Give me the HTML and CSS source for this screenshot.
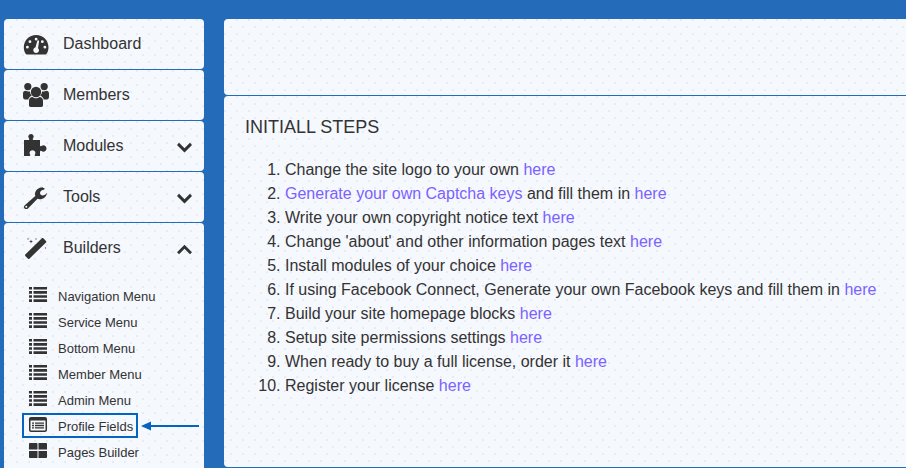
FILE: index.html
```html
<!DOCTYPE html>
<html lang="en">
<head>
    <meta charset="UTF-8">
    <title>Admin</title>
    <link rel="stylesheet" href="styles.css">
</head>
<body>
    <svg class="defs" width="0" height="0">
        <symbol id="i-list" viewBox="0 0 18 15">
            <path d="M0 0h3v2.600H0zM4.500 0H18v2.600H4.500zM0 4.100h3v2.600H0zM4.500 4.100H18v2.600H4.500zM0 8.200h3v2.600H0zM4.500 8.200H18v2.600H4.500zM0 12.300h3V15H0zM4.500 12.300H18V15H4.500z"/>
        </symbol>
        <symbol id="i-down" viewBox="0 0 16 11">
            <path d="M2.200.5 8 6.300 13.800.5l2.200 2.200L8 10.700 0 2.700z"/>
        </symbol>
        <symbol id="i-up" viewBox="0 0 16 11">
            <path d="M2.200 10.500 8 4.700l5.800 5.800 2.200-2.200L8 .3 0 8.300z"/>
        </symbol>
    </svg>

    <div class="page">
        <div class="sidebar">
            <div class="menu-item">
                <svg class="icon" viewBox="0 0 26 24"><path transform="translate(.8 .6) scale(.95)" fill-rule="evenodd" d="M13 2.500C5.800 2.500 0 8.200 0 15.300c0 2.600.7 5 2 7 .3.400.6.700 1.100.7h19.800c.5 0 .8-.3 1.100-.7 1.300-2 2-4.400 2-7 0-7.100-5.800-12.800-13-12.800zM13 5.400a1.500 1.500 0 1 1 0 3 1.500 1.500 0 0 1 0-3zM6.500 8a1.500 1.500 0 1 1 0 3 1.500 1.500 0 0 1 0-3zM3.800 13.800a1.500 1.500 0 1 1 0 3 1.500 1.500 0 0 1 0-3zM22.200 13.800a1.500 1.500 0 1 1 0 3 1.500 1.500 0 0 1 0-3zM19.500 8a1.500 1.500 0 1 1 0 3 1.500 1.500 0 0 1 0-3zM15.400 8.200c.5.100.8.500.7 1l-1.100 7.200c.6.500 1 1.300 1 2.200 0 1.700-1.300 2.900-3 2.900s-3-1.200-3-2.900c0-1.400.9-2.500 2.200-2.800l2-7c.2-.4.700-.7 1.200-.6z"/></svg>
                <span>Dashboard</span>
            </div>
            <div class="menu-item">
                <svg class="icon" viewBox="0 0 26 24"><circle cx="13" cy="9" r="5.200"/><circle cx="4.800" cy="3.600" r="3.600"/><circle cx="21.200" cy="3.600" r="3.600"/><path d="M7.500 24c-.8 0-1.500-.6-1.500-1.400v-4.800c0-2.300 1.500-3.800 3.500-3.800 1 .9 2.200 1.300 3.500 1.300s2.500-.4 3.500-1.300c2 0 3.500 1.500 3.500 3.800v4.800c0 .8-.7 1.400-1.500 1.400zM0 13.500v-2.700c0-2 1-3 2.800-3 .7.500 1.500.8 2.400.8h1.700c.1 1.600.8 3.100 1.900 4.100-1.800.6-3.200 2-3.500 3.800H2c-1.200 0-2-1.200-2-3zM26 13.500v-2.700c0-2-1-3-2.800-3-.7.500-1.500.8-2.400.8h-1.700c-.1 1.600-.8 3.100-1.900 4.100 1.800.6 3.200 2 3.500 3.800H24c1.200 0 2-1.200 2-3z"/></svg>
                <span>Members</span>
            </div>
            <div class="menu-item">
                <svg class="icon" viewBox="0 0 26 24"><path d="M1 6h4.500c.8 0 1-.8.600-1.400C5.600 3.800 5.300 3.300 5.300 2.700 5.300 1.200 6.500 0 8 0s2.700 1.200 2.700 2.700c0 .6-.3 1.100-.8 1.900-.4.600-.2 1.400.6 1.400H17v5.500c0 .8.800 1 1.400.6.800-.5 1.300-.8 1.900-.8 1.800 0 3.200 1.400 3.200 3.200s-1.400 3.200-3.200 3.200c-.6 0-1.100-.3-1.900-.8-.6-.4-1.400-.2-1.400.6V22h-4.500c-.8 0-1-.8-.6-1.400.3-.5.5-1 .5-1.600 0-1.600-1.300-2.700-2.900-2.700S6.600 17.400 6.600 19c0 .6.200 1.100.5 1.600.4.600.2 1.400-.6 1.400H1z"/></svg>
                <span>Modules</span>
                <svg class="chevron"><use href="#i-down"/></svg>
            </div>
            <div class="menu-item">
                <svg class="icon" viewBox="0 0 26 24"><path fill-rule="evenodd" d="M20 2.300C15.500 2.300 12 5.400 12 9c0 .7.100 1.300.3 1.900L1.800 20.300c-1.200 1.100-1.200 2.400-.2 3.300s2.300.9 3.400-.2l9.500-9.600c.8.300 1.500.4 2.300.4 3.800 0 6.700-2.600 7.200-6.500-1.200 1.700-2.800 2.800-4.300 2.800-1.500 0-2.700-1-2.700-2.400 0-1.700 1.300-2.800 3.300-3.300 1-.3 1.400-.6 1.300-1.300-.2-.5-1-.6-1.600-.6zM3.300 20.800a1 1 0 1 0 0 2 1 1 0 0 0 0-2z"/></svg>
                <span>Tools</span>
                <svg class="chevron"><use href="#i-down"/></svg>
            </div>
            <div class="menu-group">
                <div class="menu-item">
                    <svg class="icon" viewBox="0 0 26 24"><path d="M20.300 2.300 23 5c.4.400.4 1 0 1.400L6.400 22.700c-.4.400-1 .4-1.400 0l-2.700-2.700c-.4-.4-.4-1 0-1.400L18.900 2.300c.4-.4 1-.4 1.400 0z"/><path d="M8 3.500l.5 1.500 1.500.5-1.500.5L8 7.500 7.500 6 6 5.500l1.500-.5zM5 2l.3.7.7.3-.7.3L5 4l-.3-.7L4 3l.7-.3zM13 2l.3.7.7.3-.7.3-.3.7-.3-.7-.7-.3.7-.3zM22.500 11l.3.7.7.3-.7.3-.3.7-.3-.7-.7-.3.7-.3z"/></svg>
                    <span>Builders</span>
                    <svg class="chevron"><use href="#i-up"/></svg>
                </div>
                <ul class="submenu">
                    <li><svg class="sub-icon"><use href="#i-list"/></svg>Navigation Menu</li>
                    <li><svg class="sub-icon"><use href="#i-list"/></svg>Service Menu</li>
                    <li><svg class="sub-icon"><use href="#i-list"/></svg>Bottom Menu</li>
                    <li><svg class="sub-icon"><use href="#i-list"/></svg>Member Menu</li>
                    <li><svg class="sub-icon"><use href="#i-list"/></svg>Admin Menu</li>
                    <li class="marked">
                        <svg class="sub-icon" viewBox="0 0 18 15"><path fill-rule="evenodd" d="M2 0h14c1.100 0 2 .9 2 2v11c0 1.100-.9 2-2 2H2c-1.100 0-2-.9-2-2V2C0 .9.900 0 2 0zM1.500 3.500V13c0 .3.200.5.500.5h14c.3 0 .5-.2.500-.5V3.500zM3 5.400h2v1.400H3zM6 5.400h9v1.400H6zM3 7.800h2v1.400H3zM6 7.800h9v1.400H6zM3 10.200h2v1.400H3zM6 10.200h9v1.400H6z"/></svg>Profile Fields
                        <svg class="arrow" viewBox="0 0 58 12"><path d="M0 6 10 1.500V5h48v2H10v3.500z"/></svg>
                    </li>
                    <li><svg class="sub-icon" viewBox="0 0 18 15"><path d="M0 1c0-.6.400-1 1-1h6.800c.3 0 .7.400.7 1v5.500H0zM9.500 0H17c.6 0 1 .4 1 1v5.500H9.500zM0 8h8.500v7H1c-.6 0-1-.4-1-1zM9.500 8H18v6c0 .6-.4 1-1 1H9.500z"/></svg>Pages Builder</li>
                </ul>
            </div>
        </div>
        <div class="main">
            <div class="panel top-panel"></div>
            <div class="panel steps">
                <h2>INITIALL STEPS</h2>
                <ol>
                    <li>Change the site logo to your own <a href="#">here</a></li>
                    <li><a href="#">Generate your own Captcha keys</a> and fill them in <a href="#">here</a></li>
                    <li>Write your own copyright notice text <a href="#">here</a></li>
                    <li>Change 'about' and other information pages text <a href="#">here</a></li>
                    <li>Install modules of your choice <a href="#">here</a></li>
                    <li>If using Facebook Connect, Generate your own Facebook keys and fill them in <a href="#">here</a></li>
                    <li>Build your site homepage blocks <a href="#">here</a></li>
                    <li>Setup site permissions settings <a href="#">here</a></li>
                    <li>When ready to buy a full license, order it <a href="#">here</a></li>
                    <li>Register your license <a href="#">here</a></li>
                </ol>
            </div>
        </div>
    </div>
</body>
</html>
```

FILE: styles.css
```css
* {
    margin: 0;
    padding: 0;
    box-sizing: border-box;
}

html, body {
    height: 100%;
    overflow: hidden;
}

body {
    background-color: #246bb9;
    font-family: "Liberation Sans", Arial, sans-serif;
    color: #333333;
}

.defs {
    position: absolute;
}

.page {
    display: flex;
    gap: 20px;
    padding: 19px 0 0 4px;
    height: 468px;
}

.sidebar {
    display: flex;
    flex-direction: column;
    gap: 1px;
    width: 200px;
    flex-shrink: 0;
}

.menu-item, .panel, .menu-group {
    background-color: #f5f8fd;
    background-image:
        radial-gradient(circle at 1px 1px, #e9ebf2 .7px, transparent 1px),
        radial-gradient(circle at 1px 1px, #e9ebf2 .7px, transparent 1px);
    background-size: 12px 14px;
    background-position: 0 0, 6px 7px;
}

.menu-item {
    display: flex;
    align-items: center;
    height: 50px;
    padding-left: 19px;
    border-radius: 4px;
    font-size: 16px;
}

.menu-group {
    border-radius: 4px 4px 0 0;
    flex: 1;
}

.menu-group .menu-item {
    background: none;
}

.icon {
    width: 26px;
    height: 24px;
    margin-right: 14px;
    fill: #333333;
}

.chevron {
    width: 15px;
    height: 11px;
    margin-top: 3px;
    margin-left: auto;
    margin-right: 12px;
    fill: #333333;
}

.submenu {
    list-style: none;
    padding-top: 10px;
}

.submenu li {
    position: relative;
    display: flex;
    align-items: center;
    height: 26px;
    padding-left: 25px;
    font-size: 13px;
}

.sub-icon {
    width: 18px;
    height: 15px;
    margin-right: 11px;
    margin-bottom: 3px;
    fill: #333333;
}

.submenu .marked::before {
    content: "";
    position: absolute;
    left: 18px;
    top: 0;
    width: 112px;
    height: 21px;
    border: 2px solid #0563c1;
}

.arrow {
    position: absolute;
    left: 137px;
    top: 7px;
    width: 58px;
    height: 12px;
    fill: #0563c1;
}

.main {
    flex: 1;
    display: flex;
    flex-direction: column;
    gap: 1px;
}

.panel {
    border-radius: 4px 0 0 4px;
}

.top-panel {
    height: 76px;
}

.steps {
    height: 371px;
    padding: 20px 21px 0;
}

.steps h2 {
    font-size: 18px;
    font-weight: normal;
    line-height: 22px;
    margin-bottom: 20px;
}

.steps ol {
    padding-left: 40px;
    font-size: 16px;
    line-height: 24px;
}

.steps a {
    color: #7b61ff;
    text-decoration: none;
}
```
